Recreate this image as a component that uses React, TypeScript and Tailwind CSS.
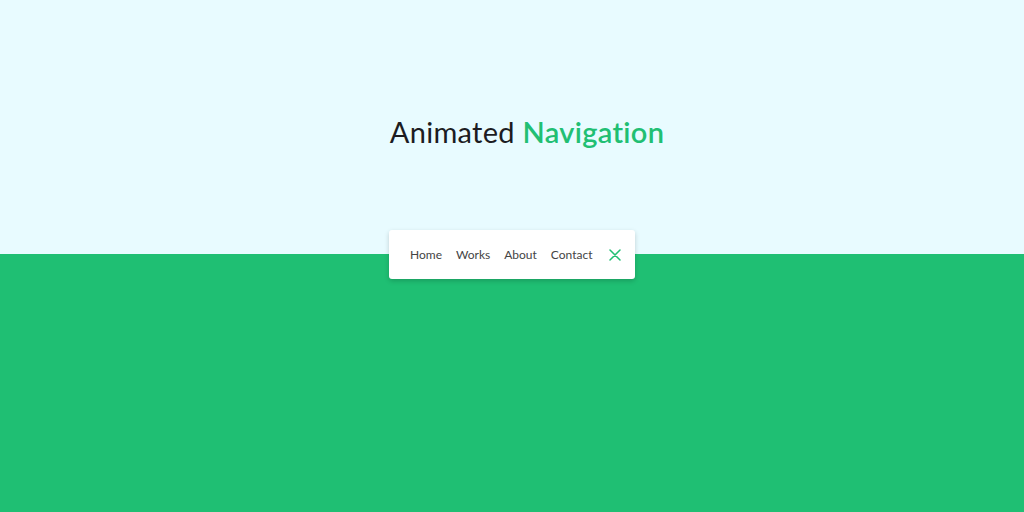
import React from "react";

export default function App() {
  return (
    <div
      className="w-full h-[512px] flex flex-col items-center bg-[linear-gradient(to_bottom,#e8fbff_254px,#1fbf73_254px)]"
      style={{ fontFamily: "Lato, 'Noto Sans', sans-serif" }}
    >
      <h1 className="mt-[112px] ml-[30px] h-[40px] leading-[40px] text-[29px] text-[#1c1c22] tracking-[0.3px] whitespace-nowrap">
        Animated <span className="text-[#21bf73] font-semibold">Navigation</span>
      </h1>
      <nav className="mt-[78px] h-[49px] w-[246px] bg-white rounded-[3px] shadow-[0_2px_5px_rgba(0,0,0,0.18)] flex items-center pl-[21px] pr-[14px]">
        <ul className="flex items-center gap-[14px] text-[12px] text-[#444444] pt-[1px]">
          <li>Home</li>
          <li>Works</li>
          <li>About</li>
          <li>Contact</li>
        </ul>
        <button className="ml-auto w-[12px] h-[12px] flex items-center justify-center">
          <svg width="12" height="12" viewBox="0 0 12 12" fill="none" stroke="#21bf73" strokeWidth="1.5" strokeLinecap="round">
            <path d="M1 1 L11 11 M11 1 L1 11" />
          </svg>
        </button>
      </nav>
    </div>
  );
}
